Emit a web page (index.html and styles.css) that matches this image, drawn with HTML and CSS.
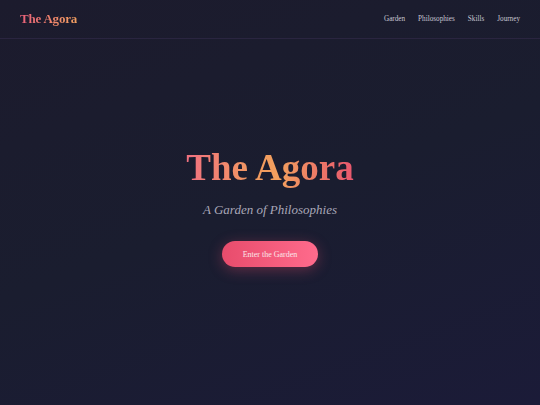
FILE: index.html
```html
<!DOCTYPE html>
<html lang="en">
<head>
<meta charset="utf-8">
<title>The Agora</title>
<link rel="stylesheet" href="styles.css">
</head>
<body>
<header class="site-header">
  <a class="logo" href="#">The Agora</a>
  <nav class="nav">
    <a href="#">Garden</a>
    <a href="#">Philosophies</a>
    <a href="#">Skills</a>
    <a href="#">Journey</a>
  </nav>
</header>
<main class="hero">
  <h1 class="hero-title">The Agora</h1>
  <p class="hero-sub">A Garden of Philosophies</p>
  <a class="hero-btn" href="#">Enter the Garden</a>
</main>
</body>
</html>
```
FILE: styles.css
```css
* { box-sizing: border-box; }
html, body { margin: 0; height: 100%; }
body {
  font-family: "Liberation Serif", "DejaVu Serif", serif;
  background: linear-gradient(160deg, #1c1b2d 0%, #1a1d2f 50%, #1b1b38 100%);
  color: #c8c6d4;
  min-height: 405px;
  display: flex;
  flex-direction: column;
}
a { text-decoration: none; }
.site-header {
  height: 39px;
  padding: 0 20px;
  display: flex;
  align-items: center;
  justify-content: space-between;
  border-bottom: 1px solid #2a2540;
}
.logo {
  font-weight: bold;
  font-size: 13px;
  letter-spacing: -0.2px;
  background: linear-gradient(90deg, #e8607a, #f2a060);
  -webkit-background-clip: text;
  background-clip: text;
  color: transparent;
}
.nav { display: flex; gap: 13px; }
.nav a { font-size: 7.2px; color: #c8c6d2; }
.hero {
  flex: 1;
  display: flex;
  flex-direction: column;
  align-items: center;
  padding-top: 107px;
}
.hero-title {
  margin: 0;
  font-size: 37px;
  font-weight: bold;
  line-height: 44px;
  background: linear-gradient(90deg, #f07080 0%, #f29a60 40%, #f2a05e 55%, #e8566e 100%);
  -webkit-background-clip: text;
  background-clip: text;
  color: transparent;
}
.hero-sub {
  margin: 12px 0 0;
  font-style: italic;
  font-size: 13px;
  color: #a9a7b8;
}
.hero-btn {
  margin-top: 23px;
  width: 96px;
  height: 26px;
  border-radius: 13px;
  display: flex;
  align-items: center;
  justify-content: center;
  font-size: 8px;
  color: #fbe6ea;
  background: linear-gradient(90deg, #e84c6c, #ff6b8c);
  box-shadow: 0 3px 14px rgba(232, 76, 108, 0.35);
}
```
